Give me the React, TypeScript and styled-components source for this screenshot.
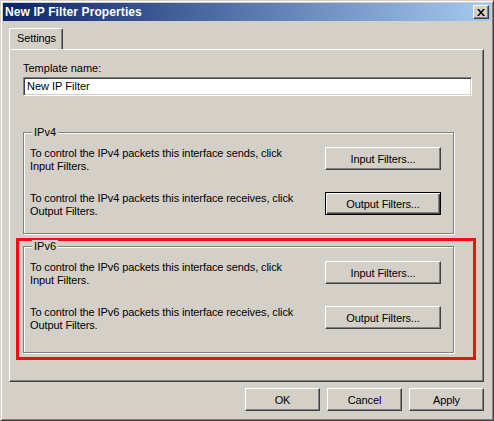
import styled, { createGlobalStyle } from "styled-components";

const GlobalStyle = createGlobalStyle`
  html, body {
    margin: 0;
    padding: 0;
    background: #d4d0c8;
  }
  body {
    font-family: "Liberation Sans", Arial, sans-serif;
    font-size: 11px;
    color: #000;
  }
`;

const Window = styled.div`
  width: 494px;
  height: 421px;
  box-sizing: border-box;
  background: #d4d0c8;
  border: 1px solid;
  border-color: #d4d0c8 #404040 #404040 #d4d0c8;
  box-shadow: inset 1px 1px #fff, inset -1px -1px #808080;
  padding: 2px;
  display: flex;
  flex-direction: column;
`;

const TitleBar = styled.div`
  height: 18px;
  display: flex;
  align-items: center;
  justify-content: space-between;
  padding: 0 2px 0 2px;
  background: linear-gradient(to right, #0a246a, #a6caf0);
`;

const Title = styled.span`
  color: #fff;
  font-weight: bold;
  font-size: 12px;
  letter-spacing: 0.1px;
`;

const CloseButton = styled.div`
  width: 16px;
  height: 14px;
  box-sizing: border-box;
  background: #d4d0c8;
  border: 1px solid;
  border-color: #fff #404040 #404040 #fff;
  box-shadow: inset -1px -1px #808080;
  display: flex;
  align-items: center;
  justify-content: center;
`;

const Body = styled.div`
  flex: 1;
  display: flex;
  flex-direction: column;
  padding: 7px 7px 0 6px;
`;

const TabStrip = styled.div`
  display: flex;
  height: 21px;
`;

const Tab = styled.div`
  position: relative;
  z-index: 1;
  height: 21px;
  box-sizing: border-box;
  padding: 3px 6px 0 7px;
  background: #d4d0c8;
  border-left: 1px solid #fff;
  border-top: 1px solid #fff;
  border-right: 1px solid #404040;
  box-shadow: inset -1px 0 #808080;
  border-radius: 2px 2px 0 0;
  margin-bottom: -1px;
  letter-spacing: -0.1px;
`;

const Panel = styled.div`
  height: 333px;
  box-sizing: border-box;
  border: 1px solid;
  border-color: #fff #404040 #404040 #fff;
  box-shadow: inset -1px -1px #808080;
  padding: 11px 14px 0 13px;
  display: flex;
  flex-direction: column;
`;

const Label = styled.div`
  height: 14px;
  line-height: 14px;
`;

const TextInput = styled.div`
  margin-top: 2px;
  width: 449px;
  height: 19px;
  box-sizing: border-box;
  background: #fff;
  border: 1px solid;
  border-color: #808080 #fff #fff #808080;
  box-shadow: inset 1px 1px #404040, inset -1px -1px #d4d0c8;
  padding: 0 3px;
  line-height: 17px;
`;

const Group = styled.div<{ $height: number; $top: number }>`
  position: relative;
  width: 431px;
  height: ${(p) => p.$height}px;
  margin-top: ${(p) => p.$top}px;
  box-sizing: border-box;
  border: 1px solid #808080;
  box-shadow: inset 1px 1px #fff, 1px 1px #fff;
  padding: 14px 12px 0 6px;
  display: flex;
  flex-direction: column;
  gap: 19px;
`;

const Legend = styled.span`
  position: absolute;
  top: -7px;
  left: 8px;
  padding: 0 2px;
  background: #d4d0c8;
  line-height: 13px;
`;

const Row = styled.div`
  display: flex;
  justify-content: space-between;
  align-items: flex-start;
`;

const RowText = styled.div`
  line-height: 13px;
  letter-spacing: -0.1px;
`;

const Button = styled.div<{ $width: number; $default?: boolean }>`
  width: ${(p) => p.$width}px;
  height: 23px;
  box-sizing: border-box;
  display: flex;
  align-items: center;
  justify-content: center;
  background: #d4d0c8;
  letter-spacing: -0.1px;
  border: 1px solid;
  border-color: ${(p) => (p.$default ? "#000" : "#fff #404040 #404040 #fff")};
  box-shadow: ${(p) =>
    p.$default
      ? "inset 1px 1px #fff, inset -1px -1px #404040, inset -2px -2px #808080"
      : "inset -1px -1px #808080"};
`;

const Highlight = styled.div`
  margin: 4px -7px 0;
  border: 3px solid #ee1111;
  padding: 5px 3px 4px 4px;
`;

const Footer = styled.div`
  display: flex;
  justify-content: flex-end;
  gap: 7px;
  padding-top: 6px;
`;

const filters = [
  { name: "IPv4", height: 102, top: 36, outDefault: true },
  { name: "IPv6", height: 107, top: 0, outDefault: false },
];

function FilterGroup({
  name,
  height,
  top,
  outDefault,
}: {
  name: string;
  height: number;
  top: number;
  outDefault: boolean;
}) {
  return (
    <Group $height={height} $top={top}>
      <Legend>{name}</Legend>
      <Row>
        <RowText>
          To control the {name} packets this interface sends, click
          <br />
          Input Filters.
        </RowText>
        <Button $width={116}>Input Filters...</Button>
      </Row>
      <Row>
        <RowText>
          To control the {name} packets this interface receives, click
          <br />
          Output Filters.
        </RowText>
        <Button $width={116} $default={outDefault}>
          Output Filters...
        </Button>
      </Row>
    </Group>
  );
}

export default function App() {
  return (
    <>
      <GlobalStyle />
      <Window>
        <TitleBar>
          <Title>New IP Filter Properties</Title>
          <CloseButton>
            <svg width="8" height="7" viewBox="0 0 8 7">
              <path d="M0 0h2l2 2.5L6 0h2L5 3.5 8 7H6L4 4.5 2 7H0l3-3.5z" fill="#000" />
            </svg>
          </CloseButton>
        </TitleBar>
        <Body>
          <TabStrip>
            <Tab>Settings</Tab>
          </TabStrip>
          <Panel>
            <Label>Template name:</Label>
            <TextInput>New IP Filter</TextInput>
            <FilterGroup {...filters[0]} />
            <Highlight>
              <FilterGroup {...filters[1]} />
            </Highlight>
          </Panel>
          <Footer>
            <Button $width={75}>OK</Button>
            <Button $width={75}>Cancel</Button>
            <Button $width={75}>Apply</Button>
          </Footer>
        </Body>
      </Window>
    </>
  );
}
